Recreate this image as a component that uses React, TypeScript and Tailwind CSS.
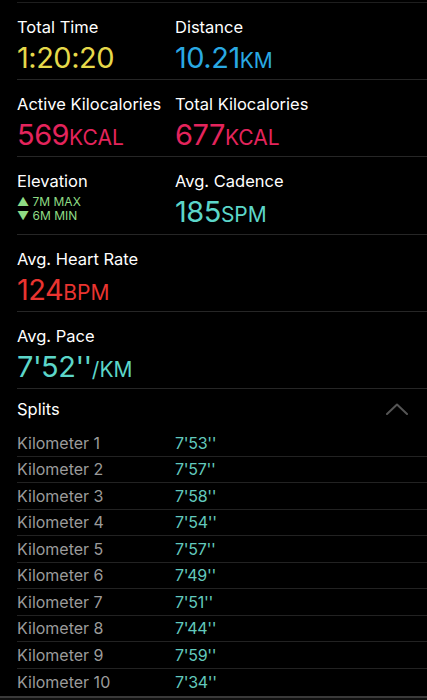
import React from 'react';

type Stat = { label: string; value: string; unit: string; color: string };

const Metric = ({ label, value, unit, color }: Stat) => (
  <div className="flex flex-col">
    <span className="text-[16.5px] leading-[20px] text-white">{label}</span>
    <span className={`mt-[5px] text-[29px] leading-[32px] tracking-[-0.5px] ${color}`}>
      {value}
      <span className="text-[21px] tracking-[0px]">{unit}</span>
    </span>
  </div>
);

const splits = [
  ['Kilometer 1', "7'53''"],
  ['Kilometer 2', "7'57''"],
  ['Kilometer 3', "7'58''"],
  ['Kilometer 4', "7'54''"],
  ['Kilometer 5', "7'57''"],
  ['Kilometer 6', "7'49''"],
  ['Kilometer 7', "7'51''"],
  ['Kilometer 8', "7'44''"],
  ['Kilometer 9', "7'59''"],
  ['Kilometer 10', "7'34''"],
];

const App = () => {
  return (
    <div
      className="h-[700px] w-[427px] overflow-hidden bg-black pl-[17px]"
      style={{ fontFamily: 'Inter, "Noto Sans", sans-serif' }}
    >
      <div className="h-[3px] border-b border-[#1e1e1e]" />

      {/* Time / Distance */}
      <div className="flex h-[77px] border-b border-[#262626] pt-[14px]">
        <div className="w-[158px]">
          <Metric label="Total Time" value="1:20:20" unit="" color="text-[#e6d94a]" />
        </div>
        <Metric label="Distance" value="10.21" unit="KM" color="text-[#2aa9e3]" />
      </div>

      {/* Calories */}
      <div className="flex h-[77px] border-b border-[#262626] pt-[14px]">
        <div className="w-[158px]">
          <Metric label="Active Kilocalories" value="569" unit="KCAL" color="text-[#e4245c]" />
        </div>
        <Metric label="Total Kilocalories" value="677" unit="KCAL" color="text-[#e4245c]" />
      </div>

      {/* Elevation / Cadence */}
      <div className="flex h-[78px] border-b border-[#262626] pt-[14px]">
        <div className="flex w-[158px] flex-col">
          <span className="text-[16.5px] leading-[20px] text-white">Elevation</span>
          <span className="mt-[4px] text-[12px] leading-[13px] text-[#8fdc85]">▲ 7M MAX</span>
          <span className="mt-[1px] text-[12px] leading-[13px] text-[#8fdc85]">▼ 6M MIN</span>
        </div>
        <Metric label="Avg. Cadence" value="185" unit="SPM" color="text-[#5cd6c9]" />
      </div>

      {/* Heart rate */}
      <div className="flex h-[77px] border-b border-[#262626] pt-[14px]">
        <Metric label="Avg. Heart Rate" value="124" unit="BPM" color="text-[#ea3430]" />
      </div>

      {/* Pace */}
      <div className="flex h-[77px] border-b border-[#262626] pt-[14px]">
        <Metric label="Avg. Pace" value={"7'52''"} unit="/KM" color="text-[#5cd6c9]" />
      </div>

      {/* Splits */}
      <div className="flex h-[41px] items-center justify-between pb-[2px] pr-[19px]">
        <span className="text-[16.5px] leading-[20px] text-white">Splits</span>
        <svg width="22" height="12" viewBox="0 0 22 12" fill="none">
          <path d="M1 11 L11 1.5 L21 11" stroke="#555555" strokeWidth="2" strokeLinecap="round" strokeLinejoin="round" />
        </svg>
      </div>
      <div className="flex flex-col">
        {splits.map(([km, pace], i) => (
          <div
            key={km}
            className={`flex h-[26.5px] items-center ${i < splits.length - 1 ? 'border-b border-[#222222]' : ''}`}
          >
            <span className="w-[158px] text-[16px] text-[#9b9b9b]">{km}</span>
            <span className="text-[16px] tracking-[-0.3px] text-[#62c9bd]">{pace}</span>
          </div>
        ))}
      </div>
      <div className="-ml-[17px] mt-[1px] h-[2px] bg-[#3a3a3a]" />
      <div className="-ml-[17px] h-[20px] bg-[#111111]" />
    </div>
  );
};

export default App;
